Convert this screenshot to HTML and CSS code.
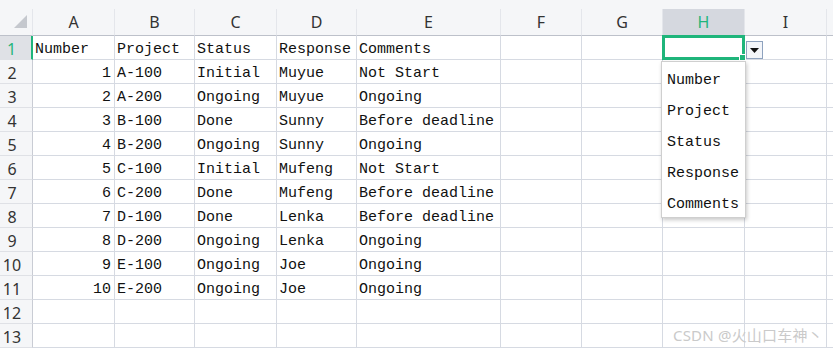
FILE: index.html
```html
<!DOCTYPE html>
<html lang="en">
<head>
    <meta charset="UTF-8">
    <title>Sheet</title>
    <link rel="stylesheet" href="styles.css">
</head>
<body>
    <div class="sheet">
        <div class="topband"></div>
        <div class="row head">
            <div class="corner">
                <svg width="33" height="27" viewBox="0 0 33 27"><polygon points="27,6 27,19 14,19" fill="#c5c8ce"/></svg>
            </div>
            <div class="ch">A</div><div class="ch">B</div><div class="ch">C</div><div class="ch">D</div><div class="ch">E</div>
            <div class="ch">F</div><div class="ch">G</div><div class="ch sel">H</div><div class="ch">I</div><div class="ch"></div>
        </div>
        <div class="row">
            <div class="rh sel">1</div>
            <div class="c">Number</div><div class="c">Project</div><div class="c">Status</div><div class="c">Response</div><div class="c">Comments</div>
            <div class="c"></div><div class="c"></div><div class="c"></div><div class="c"></div><div class="c"></div>
        </div>
        <div class="row">
            <div class="rh">2</div>
            <div class="c n">1</div><div class="c">A-100</div><div class="c">Initial</div><div class="c">Muyue</div><div class="c">Not Start</div>
            <div class="c"></div><div class="c"></div><div class="c"></div><div class="c"></div><div class="c"></div>
        </div>
        <div class="row">
            <div class="rh">3</div>
            <div class="c n">2</div><div class="c">A-200</div><div class="c">Ongoing</div><div class="c">Muyue</div><div class="c">Ongoing</div>
            <div class="c"></div><div class="c"></div><div class="c"></div><div class="c"></div><div class="c"></div>
        </div>
        <div class="row">
            <div class="rh">4</div>
            <div class="c n">3</div><div class="c">B-100</div><div class="c">Done</div><div class="c">Sunny</div><div class="c">Before deadline</div>
            <div class="c"></div><div class="c"></div><div class="c"></div><div class="c"></div><div class="c"></div>
        </div>
        <div class="row">
            <div class="rh">5</div>
            <div class="c n">4</div><div class="c">B-200</div><div class="c">Ongoing</div><div class="c">Sunny</div><div class="c">Ongoing</div>
            <div class="c"></div><div class="c"></div><div class="c"></div><div class="c"></div><div class="c"></div>
        </div>
        <div class="row">
            <div class="rh">6</div>
            <div class="c n">5</div><div class="c">C-100</div><div class="c">Initial</div><div class="c">Mufeng</div><div class="c">Not Start</div>
            <div class="c"></div><div class="c"></div><div class="c"></div><div class="c"></div><div class="c"></div>
        </div>
        <div class="row">
            <div class="rh">7</div>
            <div class="c n">6</div><div class="c">C-200</div><div class="c">Done</div><div class="c">Mufeng</div><div class="c">Before deadline</div>
            <div class="c"></div><div class="c"></div><div class="c"></div><div class="c"></div><div class="c"></div>
        </div>
        <div class="row">
            <div class="rh">8</div>
            <div class="c n">7</div><div class="c">D-100</div><div class="c">Done</div><div class="c">Lenka</div><div class="c">Before deadline</div>
            <div class="c"></div><div class="c"></div><div class="c"></div><div class="c"></div><div class="c"></div>
        </div>
        <div class="row">
            <div class="rh">9</div>
            <div class="c n">8</div><div class="c">D-200</div><div class="c">Ongoing</div><div class="c">Lenka</div><div class="c">Ongoing</div>
            <div class="c"></div><div class="c"></div><div class="c"></div><div class="c"></div><div class="c"></div>
        </div>
        <div class="row">
            <div class="rh">10</div>
            <div class="c n">9</div><div class="c">E-100</div><div class="c">Ongoing</div><div class="c">Joe</div><div class="c">Ongoing</div>
            <div class="c"></div><div class="c"></div><div class="c"></div><div class="c"></div><div class="c"></div>
        </div>
        <div class="row">
            <div class="rh">11</div>
            <div class="c n">10</div><div class="c">E-200</div><div class="c">Ongoing</div><div class="c">Joe</div><div class="c">Ongoing</div>
            <div class="c"></div><div class="c"></div><div class="c"></div><div class="c"></div><div class="c"></div>
        </div>
        <div class="row">
            <div class="rh">12</div>
            <div class="c"></div><div class="c"></div><div class="c"></div><div class="c"></div><div class="c"></div>
            <div class="c"></div><div class="c"></div><div class="c"></div><div class="c"></div><div class="c"></div>
        </div>
        <div class="row">
            <div class="rh">13</div>
            <div class="c"></div><div class="c"></div><div class="c"></div><div class="c"></div><div class="c"></div>
            <div class="c"></div><div class="c"></div><div class="c"></div><div class="c"></div><div class="c"></div>
        </div>

        <!-- active cell H1 with its validation list -->
        <div class="active"><span class="handle"></span></div>
        <div class="dropbtn">
            <svg width="9" height="5" viewBox="0 0 9 5"><polygon points="0,0 9,0 4.5,5" fill="#111"/></svg>
        </div>
        <ul class="droplist">
            <li>Number</li>
            <li>Project</li>
            <li>Status</li>
            <li>Response</li>
            <li>Comments</li>
        </ul>

        <div class="mark">CSDN @火山口车神丶</div>
    </div>
</body>
</html>
```

FILE: styles.css
```css
body {
    margin: 0;
    padding: 0;
    background-color: #fff;
    overflow: hidden;
}
.sheet {
    position: relative;
    width: 833px;
    height: 351px;
    overflow: hidden;
}
.topband {
    height: 9px;
    background-color: #f5f6f8;
}
.row {
    display: grid;
    grid-template-columns: 33px 82px 80px 82px 80px 144px 81px 81px 82px 82px 40px;
    height: 24px;
}
.row.head {
    height: 27px;
}
.row > div {
    box-sizing: border-box;
    border-right: 1px solid #d6dae2;
    border-bottom: 1px solid #d6dae2;
    overflow: hidden;
    white-space: nowrap;
}
.corner, .ch {
    background-color: #f5f6f8;
    border-bottom-color: #bdc1ca !important;
    border-right-color: #e4e6eb !important;
}
.ch {
    font-family: "Noto Sans", "Liberation Sans", sans-serif;
    font-size: 16px;
    line-height: 26px;
    color: #333;
    text-align: center;
}
.ch.sel {
    background-color: #d5d8df;
    color: #1fb57b;
}
.rh {
    background-color: #f5f6f8;
    border-right-color: #c9ccd4 !important;
    border-bottom-color: #dfe1e6 !important;
    font-family: "Noto Sans", "Liberation Sans", sans-serif;
    font-size: 16px;
    line-height: 20px;
    padding-top: 3px;
    color: #333;
    text-align: center;
    padding-right: 8px;
}
.rh.sel {
    background-color: #dfe1e6;
    color: #1fb57b;
    border-right: 2px solid #1fb57b !important;
}
.c {
    font-family: "Liberation Mono", "DejaVu Sans Mono", monospace;
    font-size: 15px;
    line-height: 19px;
    padding-top: 4px;
    color: #111;
    padding-left: 2px;
}
.c.n {
    text-align: right;
    padding-left: 0;
    padding-right: 3px;
}
.active {
    position: absolute;
    left: 662px;
    top: 35px;
    width: 83px;
    height: 25px;
    box-sizing: border-box;
    border: 3px solid #1fb57b;
}
.handle {
    position: absolute;
    right: -4px;
    bottom: -4px;
    width: 5px;
    height: 5px;
    background-color: #1fb57b;
    border: 1px solid #fff;
}
.dropbtn {
    position: absolute;
    left: 746px;
    top: 41px;
    width: 17px;
    height: 18px;
    box-sizing: border-box;
    border: 1px solid #8ea2be;
    background-color: #f3f5f9;
    display: flex;
    align-items: center;
    justify-content: center;
}
.droplist {
    position: absolute;
    left: 661px;
    top: 61px;
    width: 85px;
    height: 157px;
    box-sizing: border-box;
    margin: 0;
    padding: 3px 0 0 5px;
    list-style: none;
    background-color: #fff;
    border: 1px solid #cfcfcf;
    box-shadow: 1px 2px 4px rgba(0, 0, 0, 0.22);
    font-family: "Liberation Mono", "DejaVu Sans Mono", monospace;
    font-size: 15px;
    color: #111;
}
.droplist li {
    height: 31px;
    line-height: 31px;
}
.mark {
    position: absolute;
    left: 673px;
    top: 324px;
    font-family: "Noto Sans", "Noto Sans CJK SC", sans-serif;
    font-size: 15px;
    color: #cacaca;
    letter-spacing: 0.2px;
}
```
